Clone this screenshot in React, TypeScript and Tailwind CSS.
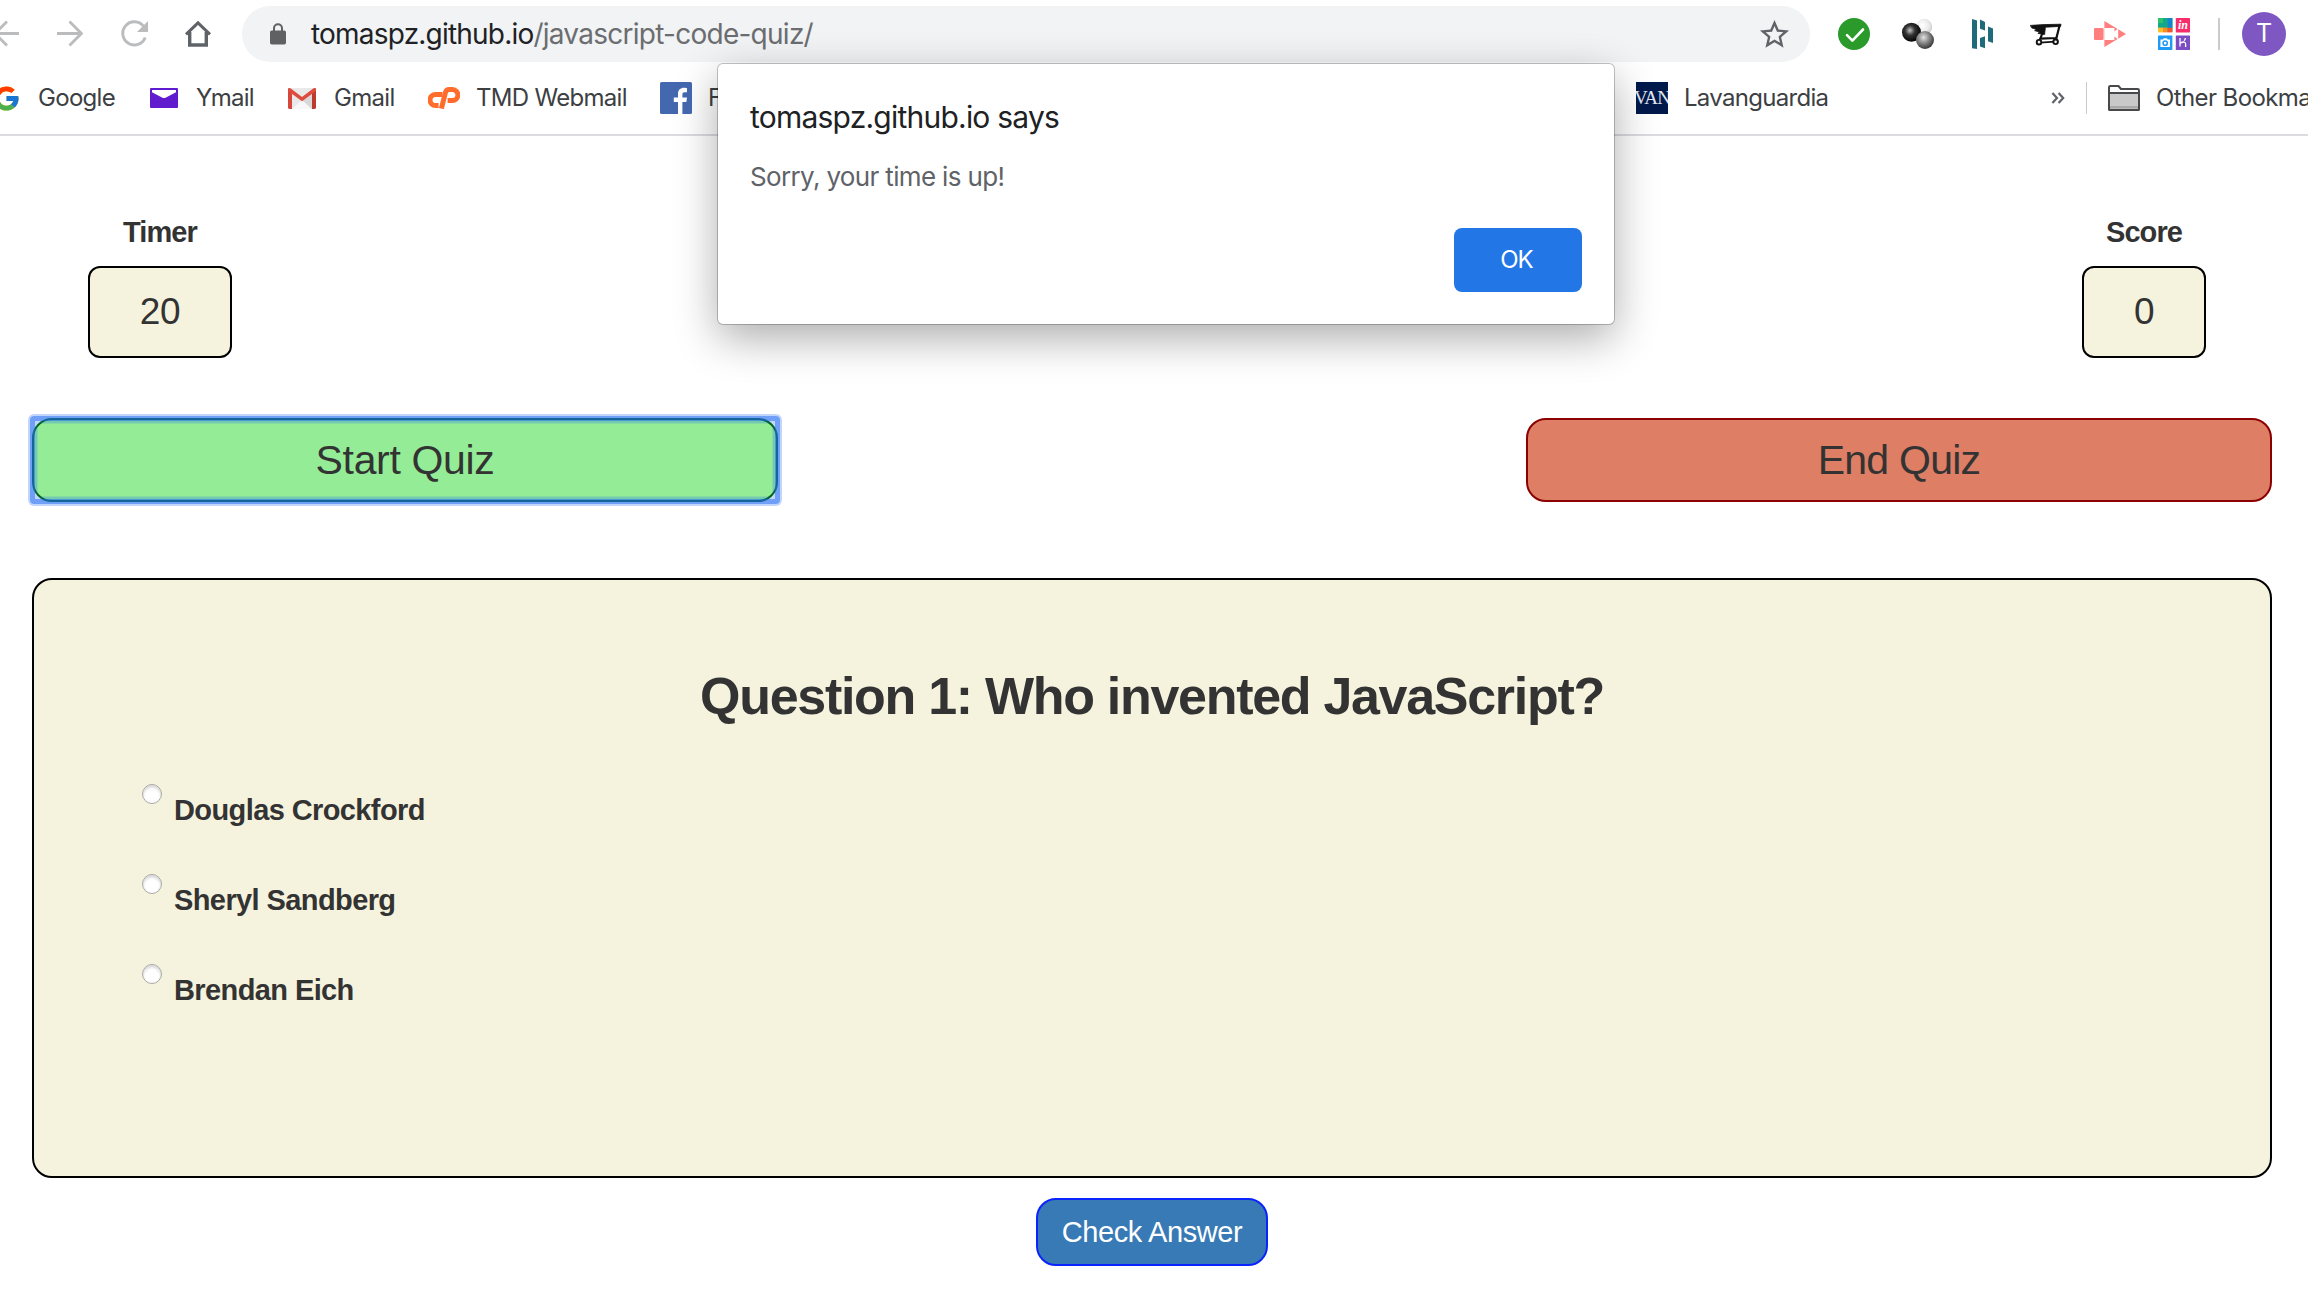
import type { ReactNode } from "react";
import { FcGoogle } from "react-icons/fc";
import { MdStarBorder } from "react-icons/md";

function BackIcon() {
  return (
    <svg className="-ml-[7px] h-[28px] w-[26px] shrink-0" viewBox="0 0 26 28" fill="none" stroke="#babcbe" strokeWidth="2.8">
      <path d="M26 13.5H2M14 1.6L2 13.5L14 25.4" />
    </svg>
  );
}

function ForwardIcon() {
  return (
    <svg className="ml-[38px] h-[28px] w-[26px] shrink-0" viewBox="0 0 26 28" fill="none" stroke="#babcbe" strokeWidth="2.8">
      <path d="M0 13.5H24M12.5 1.6L24.4 13.5L12.5 25.4" />
    </svg>
  );
}

function ReloadIcon() {
  return (
    <svg className="ml-[38px] h-[28px] w-[27px] shrink-0" viewBox="0 0 27 28" fill="none">
      <path d="M22.5 6.2A11.6 11.6 0 1 0 24.2 17.5" stroke="#babcbe" strokeWidth="2.9" />
      <path d="M27 1V12H16Z" fill="#babcbe" />
    </svg>
  );
}

function HomeIcon() {
  return (
    <svg className="ml-[37px] h-[28px] w-[26px] shrink-0" viewBox="0 0 26 28" fill="none" stroke="#5f6368">
      <path d="M4.7 12V25H21.3V12" strokeWidth="3.4" />
      <path d="M1 14.4L13 2.8L25 14.4" strokeWidth="3" />
    </svg>
  );
}

function LockIcon() {
  return (
    <svg className="h-[22px] w-[16px] shrink-0" viewBox="0 0 16 22" fill="none">
      <rect x="0" y="7.5" width="16" height="14" rx="1.8" fill="#5f6163" />
      <path d="M4 8.5V5.2A4 4 0 0 1 12 5.2V8.5" stroke="#5f6163" strokeWidth="2" />
    </svg>
  );
}

function CheckIcon() {
  return (
    <svg className="size-8" viewBox="0 0 32 32" fill="none">
      <circle cx="16" cy="16" r="16" fill="#2a9a2a" />
      <path d="M9 17.2L14.4 22.6L25 11.5" stroke="#fff" strokeWidth="2.6" strokeLinecap="round" strokeLinejoin="round" />
    </svg>
  );
}

function BallsIcon() {
  return (
    <svg className="size-8" viewBox="0 0 32 32">
      <defs>
        <radialGradient id="ballDark" cx="0.42" cy="0.4" r="0.58">
          <stop offset="0" stopColor="#c4c4c4" />
          <stop offset="0.45" stopColor="#333" />
          <stop offset="1" stopColor="#050505" />
        </radialGradient>
        <radialGradient id="ballLight" cx="0.4" cy="0.4" r="0.62">
          <stop offset="0" stopColor="#fff" />
          <stop offset="0.6" stopColor="#ececec" />
          <stop offset="1" stopColor="#cfcfcf" />
        </radialGradient>
        <radialGradient id="ballGray" cx="0.42" cy="0.36" r="0.62">
          <stop offset="0" stopColor="#e2e2e2" />
          <stop offset="0.5" stopColor="#8a8a8a" />
          <stop offset="1" stopColor="#3c3c3c" />
        </radialGradient>
      </defs>
      <circle cx="22" cy="9" r="8.2" fill="url(#ballLight)" />
      <circle cx="9.5" cy="14.3" r="9.5" fill="url(#ballDark)" />
      <circle cx="23" cy="22" r="9" fill="url(#ballGray)" />
    </svg>
  );
}

function BarsIcon() {
  return (
    <svg className="size-8" viewBox="0 0 32 32" fill="#1f6b7a">
      <path d="M6 1L11 2.6V31L6 30.2Z" />
      <path d="M14 1.6L19 4V12.6L14 10.8Z" />
      <path d="M14 20L19 18.2V30.2L14 28.6Z" />
      <path d="M22 8.6L27 10.6V25L22 23.2Z" />
    </svg>
  );
}

function CartIcon() {
  return (
    <svg className="size-8" viewBox="0 0 32 32" fill="none" stroke="#111" strokeLinecap="round" strokeLinejoin="round">
      <path d="M0.6 7.4L14 6.6L31 6.2L30.6 8.4L15.4 9.2L14.6 16.6L8 15.4L9.4 14L4.6 12.6L6.4 11.4L2 10Z" fill="#111" strokeWidth="0.8" />
      <path d="M29.6 7.6L26.4 20L10.4 20.6L12.4 15" strokeWidth="2.2" />
      <path d="M26.4 19.4L26.8 22M10.4 20.2L9 22.6M10 24.6L25 23.6" strokeWidth="1.6" />
      <circle cx="9" cy="24.2" r="2.3" fill="#eee" strokeWidth="1.9" />
      <circle cx="25.6" cy="23.8" r="2.3" fill="#eee" strokeWidth="1.9" />
    </svg>
  );
}

function CastIcon() {
  return (
    <svg className="size-8" viewBox="0 0 32 32">
      <path d="M10.4 3L32 16L10.4 29Z" fill="#ff7e7e" />
      <rect x="0" y="10" width="9.6" height="12" rx="1.2" fill="#ff7e7e" />
      <path d="M10.4 10H20.4V13.6L24.2 10.6V21.4L20.4 18.4V22H10.4Z" fill="#fff" />
    </svg>
  );
}

function TilesIcon() {
  return (
    <svg className="size-8" viewBox="0 0 32 32">
      <rect x="0" y="0" width="14.4" height="14" fill="#13a88c" />
      <rect x="0" y="0" width="5" height="5" fill="#2fc26b" />
      <rect x="0" y="9.6" width="5" height="4.8" fill="#fbc02d" />
      <rect x="5" y="9.6" width="4.7" height="4.8" fill="#fb8c1e" />
      <rect x="9.7" y="9.6" width="4.7" height="4.8" fill="#f0562c" />
      <rect x="9.7" y="0" width="4.7" height="9.6" fill="#1584d0" />
      <rect x="17.8" y="0" width="14.2" height="14.4" rx="0.6" fill="#f82e6c" />
      <text x="24.9" y="10.8" textAnchor="middle" fill="#fff" fontSize="12" fontWeight="700" fontStyle="italic" fontFamily="'Liberation Serif', serif">in</text>
      <rect x="0" y="17.6" width="14.4" height="14.4" rx="0.6" fill="#1e9bf7" />
      <path d="M2.4 21.6H4.8L5.8 20.2H8.8L9.8 21.6H12V29H2.4Z" fill="#fff" />
      <circle cx="7.2" cy="25.2" r="2.1" fill="#fff" stroke="#1e9bf7" strokeWidth="1.5" />
      <rect x="17.8" y="17.6" width="14.2" height="14.4" rx="0.6" fill="#7b4cc4" />
      <path d="M22 20V28.6M22 25.4C25 23.4 27.6 23.6 27.6 25.8V29M27.4 20C27.3 21.2 26.8 22 26 22.8" fill="none" stroke="#fff" strokeWidth="1.3" />
    </svg>
  );
}

function YmailIcon() {
  return (
    <svg className="h-5 w-7 shrink-0" viewBox="0 0 28 20">
      <rect width="28" height="20" rx="1" fill="#611bcf" />
      <path d="M2 2H26V4.2L16 9.4Q14 10.4 12 9.4L2 4.2Z" fill="#fff" />
    </svg>
  );
}

function GmailIcon() {
  return (
    <svg className="h-[21px] w-7 shrink-0" viewBox="0 0 28 21">
      <rect x="0" y="0" width="28" height="21" rx="1.4" fill="#e9e9e9" />
      <path d="M4 21L14 12L24 21Z" fill="#f7f7f7" />
      <path d="M14 12L24 21V6Z" fill="#d8d8d8" />
      <path d="M0 1.4Q0 0 1.4 0L4 2V21H1.4Q0 21 0 19.6Z" fill="#d6463a" />
      <path d="M28 1.4Q28 0 26.6 0L24 2V21H26.6Q28 21 28 19.6Z" fill="#bd3a30" />
      <path d="M0.6 0.4H2.8L14 9L25.2 0.4H27.4L28 3L14 13.2L0 3Z" fill="#de4b3f" />
    </svg>
  );
}

function CpanelIcon() {
  return (
    <svg className="h-[22px] w-8 shrink-0" viewBox="0 0 32 22" fill="none" stroke="#ff6c2c" strokeWidth="5" strokeLinejoin="round">
      <path d="M14.4 7.4H7.6A5.4 5.4 0 0 0 7.6 18.6H10.6" />
      <path d="M13.4 21.6L17.4 5.6Q18.2 2.6 21.2 2.6H24.6A5.3 5.3 0 0 1 24.4 13.4H19.6" />
    </svg>
  );
}

function FacebookIcon() {
  return (
    <svg className="size-8 shrink-0" viewBox="0 0 32 32">
      <rect width="32" height="32" rx="1.6" fill="#4468b0" />
      <path d="M18 32V20H13.8V15.4H18V12C18 8 20.4 5.8 24 5.8Q26 5.8 27 6V10.2H24.8C23 10.2 22.4 11 22.4 12.6V15.4H27L26.4 20H22.4V32Z" fill="#fff" />
    </svg>
  );
}

function FolderIcon() {
  return (
    <svg className="h-[26px] w-8 shrink-0" viewBox="0 0 32 26" stroke="#47494b" strokeWidth="2" strokeLinejoin="round">
      <path d="M1 24V2.4Q1 1 2.4 1H10.4L13 4H29.6Q31 4 31 5.4V8H1" fill="#fff" />
      <path d="M1 8H31V23.4Q31 25 29.6 25H2.4Q1 25 1 23.4Z" fill="#c9c9c9" />
      <path d="M2 22.2H30" stroke="#a9a9a9" strokeWidth="2.4" />
      <path d="M1 8H31V23.4Q31 25 29.6 25H2.4Q1 25 1 23.4Z" fill="none" />
    </svg>
  );
}

function Toolbar() {
  return (
    <div className="flex h-[68px] items-center">
      <BackIcon />
      <ForwardIcon />
      <ReloadIcon />
      <HomeIcon />
      <div className="ml-[31px] flex h-14 w-[1568px] shrink-0 items-center rounded-full bg-[#f1f3f4] pr-[18px] pl-7">
        <LockIcon />
        <div className="ml-[25px] text-[28px] tracking-[-0.8px] whitespace-nowrap text-[#202124]">
          tomaspz.github.io<span className="tracking-[-0.74px] text-[#6b6d70]">/javascript-code-quiz/</span>
        </div>
        <MdStarBorder className="ml-auto size-[35px] text-[#5f6368]" />
      </div>
      <div className="ml-7 flex shrink-0 gap-8">
        <CheckIcon />
        <BallsIcon />
        <BarsIcon />
        <CartIcon />
        <CastIcon />
        <TilesIcon />
      </div>
      <div className="ml-7 h-8 w-0.5 shrink-0 bg-[#cacbcd]" />
      <div className="ml-[22px] flex size-11 shrink-0 items-center justify-center rounded-full bg-[#7e57c2] text-[25px] text-white">T</div>
    </div>
  );
}

function Bookmark({ icon, label, className }: { icon: ReactNode; label: string; className: string }) {
  return (
    <div className={`flex shrink-0 items-center ${className}`}>
      {icon}
      <span className="pb-px whitespace-nowrap">{label}</span>
    </div>
  );
}

function BookmarksBar() {
  return (
    <div className="flex h-[66px] items-center pb-[6px] text-[24px] tracking-[-0.7px] text-[#3c4043]">
      <Bookmark className="-ml-[8px] w-[158px] gap-[17px]" icon={<FcGoogle className="size-[29px] shrink-0" />} label="Google" />
      <Bookmark className="w-[138px] gap-[18px]" icon={<YmailIcon />} label="Ymail" />
      <Bookmark className="w-[140px] gap-[18px]" icon={<GmailIcon />} label="Gmail" />
      <Bookmark className="w-[232px] gap-4" icon={<CpanelIcon />} label="TMD Webmail" />
      <Bookmark className="w-[976px] gap-4" icon={<FacebookIcon />} label="Facebook" />
      <Bookmark
        className="w-[415px] gap-4"
        icon={
          <span className="flex size-8 shrink-0 items-center justify-center overflow-hidden bg-[#00194b] font-['Liberation_Serif',serif] text-[19px] tracking-[-0.9px] text-[#e4e8f0]">
            VAN
          </span>
        }
        label="Lavanguardia"
      />
      <svg className="h-3 w-3.5 shrink-0" viewBox="0 0 14 12" fill="none" stroke="#5f6368" strokeWidth="2.2">
        <path d="M1.4 1L6 6L1.4 11M7.6 1L12.2 6L7.6 11" />
      </svg>
      <div className="ml-[21px] h-8 w-px shrink-0 bg-[#c8cacc]" />
      <Bookmark className="ml-[21px] gap-4 tracking-[-0.6px]" icon={<FolderIcon />} label="Other Bookmarks" />
    </div>
  );
}

function Counter({ label, value, className }: { label: string; value: number; className: string }) {
  return (
    <div className={`flex flex-col items-center ${className}`}>
      <div className="text-[29px] leading-10 font-bold tracking-[-0.9px]">{label}</div>
      <div className="mt-3.5 flex h-[92px] w-full items-center justify-center rounded-[12px] border-2 border-black bg-[#f5f3de] text-[37px] tracking-[-0.4px]">
        {value}
      </div>
    </div>
  );
}

function Quiz() {
  const answers = ["Douglas Crockford", "Sheryl Sandberg", "Brendan Eich"];
  return (
    <main className="flex flex-col pt-[76px] pr-9 pl-8 font-['Liberation_Sans',Arial,sans-serif] text-[#333333]">
      <div className="flex justify-between pr-[66px] pl-14">
        <Counter label="Timer" value={20} className="w-36" />
        <Counter label="Score" value={0} className="w-[124px]" />
      </div>
      <div className="mt-[60px] flex justify-between">
        <button className="relative h-[84px] w-[746px] rounded-[20px] border-2 border-[#006400] bg-[#94ed96] pt-0.5 text-[41px] tracking-[-0.35px]">
          Start Quiz
          <span className="absolute -inset-[4px] rounded-[4px] border-[5px] border-[#1c67f4]/63 shadow-[0_0_0_2px_rgba(28,103,244,0.27),inset_0_0_0_2.5px_rgba(28,103,244,0.27)]" />
        </button>
        <button className="h-[84px] w-[746px] rounded-[20px] border-2 border-[#8b0000] bg-[#dd7e65] pt-0.5 text-[41px] tracking-[-0.75px]">
          End Quiz
        </button>
      </div>
      <section className="mt-[76px] h-[600px] rounded-[20px] border-2 border-black bg-[#f5f3de] pt-[86px]">
        <h1 className="text-center text-[52px] leading-[60px] font-bold tracking-[-1.3px]">Question 1: Who invented JavaScript?</h1>
        <div className="mt-[58px] ml-[108px]">
          {answers.map((answer) => (
            <label key={answer} className="flex h-[90px] items-start gap-3">
              <input
                type="radio"
                name="answer"
                className="size-5 appearance-none rounded-full border border-[#a9a9a4] bg-white shadow-[inset_0_2px_3px_rgba(0,0,0,0.18)]"
              />
              <span className="mt-1.5 text-[29px] leading-10 font-bold tracking-[-0.6px]">{answer}</span>
            </label>
          ))}
        </div>
      </section>
      <button className="mt-5 h-[68px] w-[232px] self-center rounded-[20px] border-2 border-[#0a24fb] bg-[#387ab5] pt-px text-[29px] tracking-[-0.4px] whitespace-nowrap text-white">
        Check Answer
      </button>
    </main>
  );
}

function AlertDialog() {
  return (
    <div
      role="alertdialog"
      className="absolute top-[64px] left-[718px] flex h-[260px] w-[896px] flex-col rounded-[5px] bg-white px-8 pt-[33px] pb-8 shadow-[0_0_0_1px_rgba(0,0,0,0.22),0_14px_44px_rgba(0,0,0,0.33)]"
    >
      <div className="text-[30px] leading-[40px] tracking-[-0.78px] text-[#202124]">tomaspz.github.io says</div>
      <div className="mt-[20px] text-[26px] leading-[40px] tracking-[-0.65px] text-[#5f6368]">Sorry, your time is up!</div>
      <button className="mt-auto h-16 w-32 self-end rounded-lg bg-[#2376e5] pr-[3px] text-[24px] tracking-[-0.9px] text-white">OK</button>
    </div>
  );
}

export default function App() {
  return (
    <div className="relative h-[1296px] w-[2308px] overflow-hidden bg-white font-['Inter',sans-serif]">
      <header className="h-[136px] border-b-2 border-[#dadce0]">
        <Toolbar />
        <BookmarksBar />
      </header>
      <Quiz />
      <AlertDialog />
    </div>
  );
}
